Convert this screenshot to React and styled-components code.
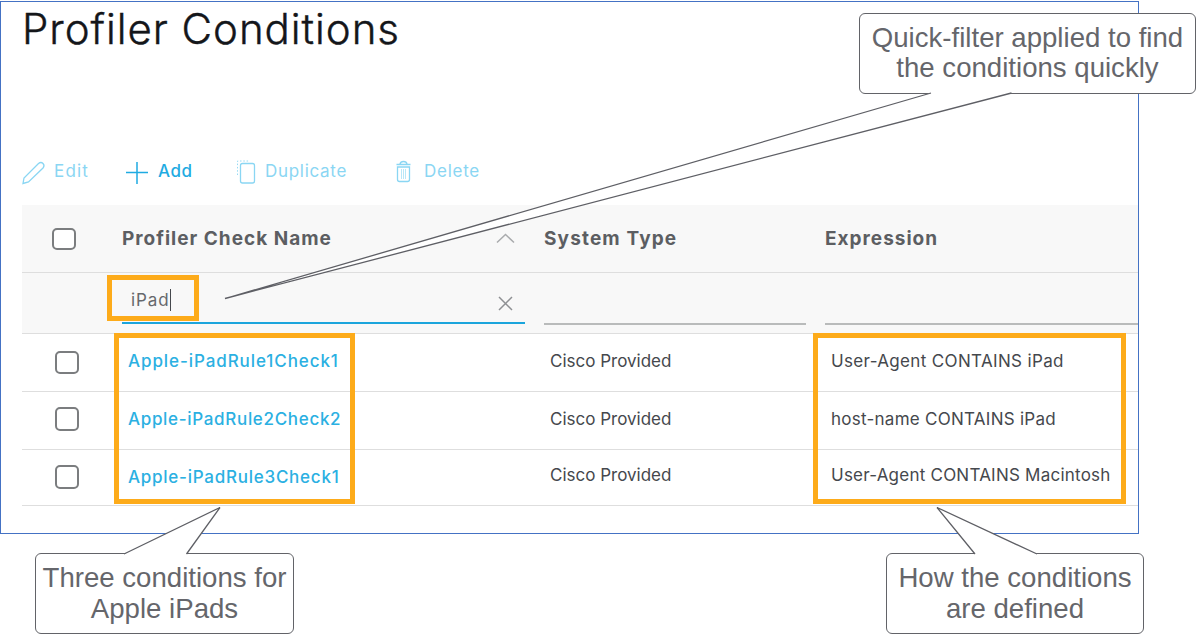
import React from "react";
import styled, { createGlobalStyle } from "styled-components";

const GlobalStyle = createGlobalStyle`
  * { box-sizing: border-box; }
  body { margin: 0; background: #fff; font-family: Inter, "Liberation Sans", sans-serif; }
`;

const Stage = styled.main`
  position: relative;
  width: 1197px;
  height: 635px;
  padding-top: 1px;
  overflow: hidden;
`;

const Panel = styled.section`
  width: 1139px;
  height: 533px;
  border: 1px solid #4472c4;
  padding-left: 21px;
  background: #fff;
`;

const Title = styled.h1`
  margin: 0;
  height: 140px;
  padding-top: 1px;
  font-size: 42px;
  line-height: 51px;
  font-weight: 300;
  letter-spacing: 0.95px;
  -webkit-text-stroke: 0.4px #14161a;
  color: #14161a;
  white-space: nowrap;
`;

const Toolbar = styled.div`
  display: flex;
  height: 63px;
  padding-top: 17px;
`;

const Action = styled.button`
  display: flex;
  align-items: flex-start;
  width: ${(p) => p.$width}px;
  padding: 0;
  border: 0;
  background: none;
  font: ${(p) => (p.$active ? 500 : 400)} 17px/24px Inter, sans-serif;
  letter-spacing: ${(p) => p.$track}px;
  color: ${(p) => (p.$active ? "#1fabe2" : "#8ad6f3")};
  white-space: nowrap;
`;

const ActionIcon = styled.svg`
  flex: none;
  width: 24px;
  height: 26px;
  margin-right: ${(p) => p.$gap}px;
  fill: none;
  stroke: currentColor;
  stroke-width: ${(p) => p.$stroke || 1.3};
`;

const Row = styled.div`
  display: grid;
  grid-template-columns: 100px 422px 281px 1fr;
  height: ${(p) => p.$height}px;
  border-bottom: 1.5px solid #dedede;
  background: ${(p) => (p.$shaded ? "#f8f8f8" : "#fff")};
`;

const HeadCell = styled.div`
  display: flex;
  justify-content: space-between;
  align-items: center;
  padding-right: 29px;
  font-size: 19px;
  font-weight: 700;
  line-height: 24px;
  letter-spacing: ${(p) => p.$track}px;
  color: #5c5e62;
  white-space: nowrap;
`;

const CheckCell = styled.div`
  padding: ${(p) => p.$top}px 0 0 ${(p) => p.$left}px;
`;

const CheckBox = styled.span`
  display: block;
  width: 24px;
  height: ${(p) => p.$height || 23}px;
  border: 2px solid #7b7d7f;
  border-radius: 5px;
  background: #fff;
`;

const Cell = styled.div`
  padding: ${(p) => p.$top}px 0 0 6px;
  font-size: 17px;
  line-height: 22px;
  letter-spacing: ${(p) => p.$track}px;
  color: #45484d;
  white-space: nowrap;
`;

const LinkCell = styled(Cell)`
  font-weight: 500;
  color: #2bb0e2;
`;

const FilterField = styled.div`
  display: flex;
  justify-content: space-between;
  height: ${(p) => (p.$active ? 51 : 52)}px;
  margin-right: 19px;
  padding: 16px 11px 0 9px;
  border-bottom: 2px solid ${(p) => (p.$active ? "#1ba5dc" : "#b9bbbb")};
`;

const LastFilterField = styled(FilterField)`
  margin-right: 0;
`;

const FilterText = styled.span`
  height: 22px;
  border-right: 1px solid #45484d;
  font-size: 17px;
  line-height: 23px;
  letter-spacing: 0.9px;
  color: #66686c;
`;

const Glyph = styled.svg`
  fill: none;
  stroke: ${(p) => p.$color || "#8e9093"};
  stroke-width: 1.5;
`;

const Highlight = styled.div`
  position: absolute;
  left: ${(p) => p.$x}px;
  top: ${(p) => p.$y}px;
  width: ${(p) => p.$w}px;
  height: ${(p) => p.$h}px;
  border: 5px solid #fdab1a;
`;

const Callout = styled.div`
  position: absolute;
  left: ${(p) => p.$x}px;
  top: ${(p) => p.$y}px;
  width: ${(p) => p.$w}px;
  height: 81px;
  padding-top: 9px;
  border: 1.5px solid #626368;
  border-radius: 6px;
  background: #fff;
  color: #65666b;
  font-family: "Liberation Sans", Arial, sans-serif;
  font-size: 27.6px;
  line-height: ${(p) => p.$line}px;
  text-align: center;
  white-space: nowrap;
`;

const Pointers = styled.svg`
  position: absolute;
  left: 0;
  top: 0;
  fill: #fff;
  stroke: #5e5f65;
  stroke-width: 1.3;
  pointer-events: none;
`;

const rules = [
  { name: "Apple-iPadRule1Check1", expression: "User-Agent CONTAINS iPad", height: 58, box: 17, boxHeight: 23, text: 16, link: 16, track: 0.92, exprTrack: 0.35 },
  { name: "Apple-iPadRule2Check2", expression: "host-name CONTAINS iPad", height: 58, box: 15, boxHeight: 24, text: 16, link: 16, track: 0.68, exprTrack: 0.26 },
  { name: "Apple-iPadRule3Check1", expression: "User-Agent CONTAINS Macintosh", height: 56, box: 15, boxHeight: 24, text: 14, link: 16, track: 0.75, exprTrack: 0.23 },
];

export default function App() {
  return (
    <>
      <GlobalStyle />
      <Stage>
        <Panel>
          <Title>Profiler Conditions</Title>
          <Toolbar>
            <Action $width={103} $track={1.2}>
              <ActionIcon $gap={8} viewBox="0 0 24 26">
                <path d="M1 24.500 2 19 16.500 4.500Q19 2.500 21 4.500 23 6.500 21 9L6.500 23Z" />
              </ActionIcon>
              Edit
            </Action>
            <Action $width={111} $track={0.5} $active>
              <ActionIcon $gap={9} $stroke={1.5} viewBox="0 0 24 26">
                <path d="M12 3v22M1 13.5h22" />
              </ActionIcon>
              Add
            </Action>
            <Action $width={157} $track={0.7}>
              <ActionIcon $gap={5} viewBox="0 0 24 26">
                <rect x="4.5" y="4.5" width="14" height="19.500" rx="2" />
                <path d="M1.500 16V2h11" strokeDasharray="1.5 1.8" strokeWidth="0.9" />
              </ActionIcon>
              Duplicate
            </Action>
            <Action $width={100} $track={0.75}>
              <ActionIcon $gap={7} viewBox="0 0 24 26">
                <path d="M3.500 5.500h14M7 5q.500-2.500 3.500-2.500T14 5M4.500 8v12.500q0 2 2 2h8q2 0 2-2V8z" />
                <path d="M8.500 10v10M10.500 10v10M12.500 10v10" strokeWidth="0.6" />
              </ActionIcon>
              Delete
            </Action>
          </Toolbar>

          <Row $height={68} $shaded>
            <CheckCell $top={23} $left={30}><CheckBox $height={22} /></CheckCell>
            <HeadCell $track={1}>
              Profiler Check Name
              <Glyph $color="#a9abad" width="20" height="12" viewBox="0 0 20 12"><path d="M2 9.500 10.500 1.500l8.500 8" /></Glyph>
            </HeadCell>
            <HeadCell $track={1.15}>System Type</HeadCell>
            <HeadCell $track={1}>Expression</HeadCell>
          </Row>
          <Row $height={61} $shaded>
            <span />
            <FilterField $active>
              <FilterText>iPad</FilterText>
              <Glyph width="18" height="28" viewBox="0 0 18 28"><path d="m3 8 13 13M16 8 3 21" /></Glyph>
            </FilterField>
            <FilterField />
            <LastFilterField />
          </Row>
          {rules.map((r) => (
            <Row key={r.name} $height={r.height}>
              <CheckCell $top={r.box} $left={33}><CheckBox $height={r.boxHeight} /></CheckCell>
              <LinkCell $top={r.link} $track={r.track}>{r.name}</LinkCell>
              <Cell $top={r.text} $track={0}>Cisco Provided</Cell>
              <Cell $top={r.text} $track={r.exprTrack}>{r.expression}</Cell>
            </Row>
          ))}
        </Panel>

        <Highlight $x={107} $y={275} $w={92} $h={46} />
        <Highlight $x={114} $y={333} $w={241} $h={171} />
        <Highlight $x={813} $y={333} $w={313} $h={171} />

        <Callout $x={859} $y={13} $w={337} $line={30.4}>
          Quick-filter applied to find<br />the conditions quickly
        </Callout>
        <Callout $x={35} $y={553} $w={259} $line={30.8}>
          Three conditions for<br />Apple iPads
        </Callout>
        <Callout $x={886} $y={553} $w={258} $line={30.8}>
          How the conditions<br />are defined
        </Callout>

        <Pointers width="1197" height="635" viewBox="0 0 1197 635">
          <path d="M931 93 225 298.500 1011.500 93" />
          <path d="M124 554 220 507.500 186.500 554" />
          <path d="M975 554 937 507.500 1037 554" />
        </Pointers>
      </Stage>
    </>
  );
}
